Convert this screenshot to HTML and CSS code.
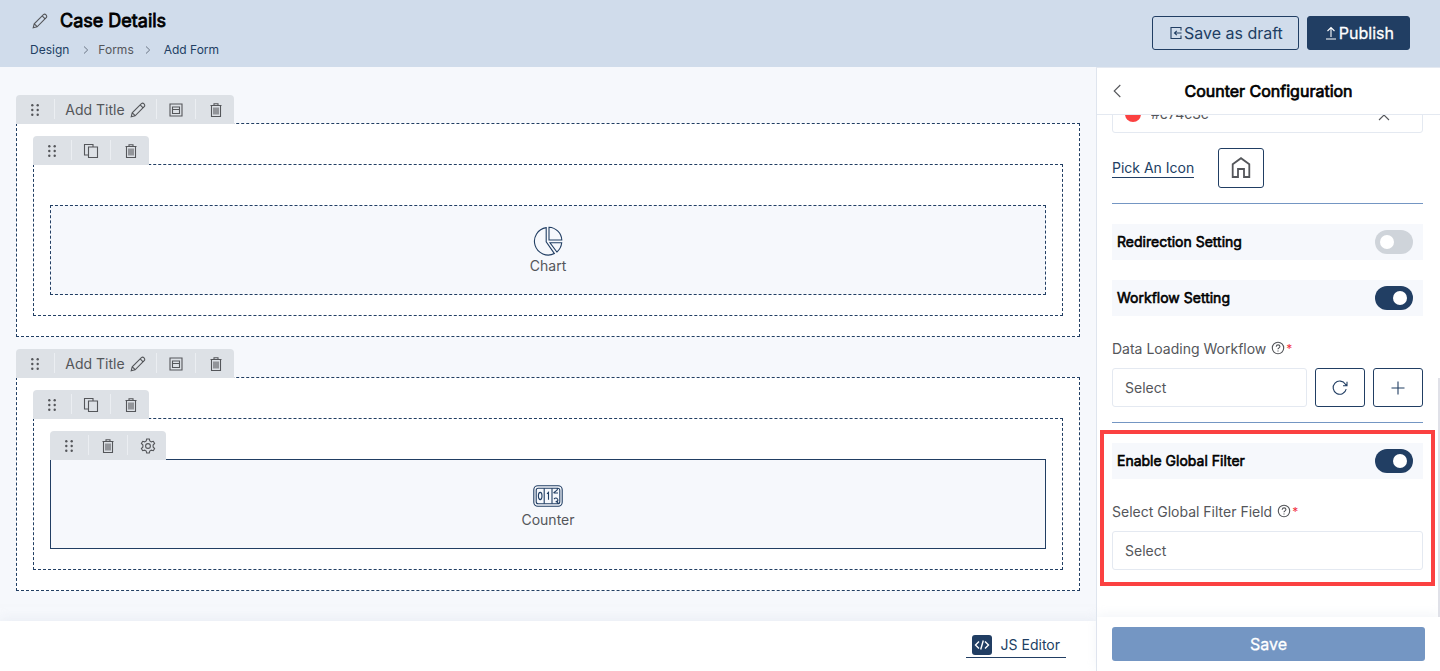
FILE: index.html
```html
<!DOCTYPE html>
<html lang="en">
<head>
<meta charset="utf-8">
<title>Case Details</title>
<link rel="stylesheet" href="styles.css">
</head>
<body>
<svg class="sprite" aria-hidden="true">
  <symbol id="pencil" viewBox="0 0 16 16"><path d="M1.2 14.8l1-4L11.4 1.6q1.4-1 2.6.3t.4 2.6L5.1 13.8zM10.2 2.9l2.9 2.9M2.3 10.8l2.9 2.9"/></symbol>
  <symbol id="grip" viewBox="0 0 10 14"><g fill="currentColor" stroke="none"><circle cx="2.3" cy="2.3" r="1.2"/><circle cx="7.7" cy="2.3" r="1.2"/><circle cx="2.3" cy="7" r="1.2"/><circle cx="7.7" cy="7" r="1.2"/><circle cx="2.3" cy="11.7" r="1.2"/><circle cx="7.7" cy="11.7" r="1.2"/></g></symbol>
  <symbol id="trash" viewBox="0 0 14 16"><path d="M1.5 3.5h11M5 3.3V1.7h4v1.6M2.5 3.7v10.8h9V3.7M5 5.5v7M7 5.5v7M9 5.5v7"/></symbol>
  <symbol id="layout" viewBox="0 0 14 14"><path d="M1 1h12v12H1zM3.5 4h7v6.5h-7zM3.5 6.5h7"/></symbol>
  <symbol id="copy" viewBox="0 0 16 16"><path d="M5.5 12h-4V1.5h8.5v2.5M5.5 4h9v10.5h-9z"/></symbol>
  <symbol id="gear" viewBox="0 0 16 16"><circle cx="8" cy="8" r="2.4"/><path d="M6.7 1h2.6l.5 2 1.5.9 2-.6 1.3 2.2L13.1 7v2l1.5 1.5-1.3 2.2-2-.6-1.5.9-.5 2H6.7l-.5-2-1.5-.9-2 .6-1.3-2.2L2.9 9V7L1.4 5.5l1.3-2.2 2 .6L6.2 3z"/></symbol>
  <symbol id="help" viewBox="0 0 14 14"><circle cx="7" cy="7" r="5.7"/><path d="M5.2 5.7q.2-1.8 1.9-1.8t1.8 1.5q0 .9-1 1.5-.9.5-.9 1.4M7 9.4v1.2"/></symbol>
  <symbol id="right" viewBox="0 0 6 10"><path d="M1 1.5L4.7 5 1 8.5"/></symbol>
</svg>

<header class="topbar">
  <div class="heading">
    <div class="title-row">
      <button class="plain" aria-label="Rename form"><svg class="icon16"><use href="#pencil"/></svg></button>
      <h1 class="title">Case Details</h1>
    </div>
    <nav class="crumbs" aria-label="Breadcrumb">
      <a class="crumb" href="#design">Design</a>
      <svg class="crumb-arrow"><use href="#right"/></svg>
      <a class="crumb muted" href="#forms">Forms</a>
      <svg class="crumb-arrow"><use href="#right"/></svg>
      <a class="crumb last" href="#add" aria-current="page">Add Form</a>
    </nav>
  </div>
  <div class="actions">
    <button class="btn outline"><svg class="icon12" viewBox="0 0 12 14"><path d="M11 4.5V1.5H1v11h10v-3M11.5 7H4.5M6.8 4.8L4.5 7l2.3 2.2"/></svg>Save as draft</button>
    <button class="btn solid"><svg class="icon12" viewBox="0 0 12 14"><path d="M6 11V1.5M2.5 5L6 1.5 9.5 5M1 13h10"/></svg>Publish</button>
  </div>
</header>

<div class="workspace">
  <main class="editor">
    <div class="canvas">
      <section class="block">
        <div class="toolbar">
          <button class="tool" aria-label="Move section"><svg class="grip"><use href="#grip"/></svg></button>
          <button class="tool name">Add Title<svg class="icon16"><use href="#pencil"/></svg></button>
          <button class="tool" aria-label="Section layout"><svg class="icon14"><use href="#layout"/></svg></button>
          <button class="tool" aria-label="Delete section"><svg class="trash"><use href="#trash"/></svg></button>
        </div>
        <div class="frame">
          <div class="toolbar">
            <button class="tool" aria-label="Move column"><svg class="grip"><use href="#grip"/></svg></button>
            <button class="tool" aria-label="Copy column"><svg class="icon16"><use href="#copy"/></svg></button>
            <button class="tool" aria-label="Delete column"><svg class="trash"><use href="#trash"/></svg></button>
          </div>
          <div class="frame idle">
            <div class="widget">
              <svg class="chart" viewBox="0 0 30 30"><path d="M13.2 1.6A13.8 13.8 0 1 0 21.4 27.6L13.2 15.8zM16 1.2V14h12.8A13.4 13.4 0 0 0 16 1.2zM17 16.8h11.7a14 14 0 0 1-4.8 9.2z"/></svg>
              <span>Chart</span>
            </div>
          </div>
        </div>
      </section>

      <section class="block">
        <div class="toolbar">
          <button class="tool" aria-label="Move section"><svg class="grip"><use href="#grip"/></svg></button>
          <button class="tool name">Add Title<svg class="icon16"><use href="#pencil"/></svg></button>
          <button class="tool" aria-label="Section layout"><svg class="icon14"><use href="#layout"/></svg></button>
          <button class="tool" aria-label="Delete section"><svg class="trash"><use href="#trash"/></svg></button>
        </div>
        <div class="frame">
          <div class="toolbar">
            <button class="tool" aria-label="Move column"><svg class="grip"><use href="#grip"/></svg></button>
            <button class="tool" aria-label="Copy column"><svg class="icon16"><use href="#copy"/></svg></button>
            <button class="tool" aria-label="Delete column"><svg class="trash"><use href="#trash"/></svg></button>
          </div>
          <div class="frame">
            <div class="toolbar">
              <button class="tool" aria-label="Move counter"><svg class="grip"><use href="#grip"/></svg></button>
              <button class="tool" aria-label="Delete counter"><svg class="trash"><use href="#trash"/></svg></button>
              <button class="tool" aria-label="Counter settings"><svg class="icon16"><use href="#gear"/></svg></button>
            </div>
            <div class="widget selected">
              <svg class="counter" viewBox="0 0 30 22"><rect x=".8" y=".8" width="28.4" height="20.4" rx="4"/><rect x="3.2" y="3.2" width="23.6" height="15.6" rx="2"/><path d="M11.2 3.2v15.6M19 3.2v15.6M14 8.8l1.5-1.5v7.5M20.5 8h4.5M20.5 8l3.8-3.2V3M21 14q2-2 3.5 0t-1.8 2.6q3.2.2 1.6 2"/><ellipse cx="7.2" cy="11" rx="1.8" ry="3.6"/></svg>
              <span>Counter</span>
            </div>
          </div>
        </div>
      </section>
    </div>
    <footer class="editor-foot">
      <a class="js-link" href="#js"><svg class="code" viewBox="0 0 20 20"><rect width="20" height="20" rx="3"/><path d="M7 6.5L3.5 10 7 13.5M13 6.5l3.5 3.5-3.5 3.5M11.3 5.5l-2.6 9"/></svg>JS Editor</a>
    </footer>
  </main>

  <aside class="panel">
    <div class="panel-head">
      <button class="plain" aria-label="Back"><svg class="back" viewBox="0 0 8 14"><path d="M7.3 1L1.2 7l6.1 6"/></svg></button>
      <h2 class="panel-title">Counter Configuration</h2>
    </div>
    <div class="panel-body">
      <div class="colour-field">
        <span class="swatch"></span>
        <input class="colour-input" type="text" value="#e74c3c" aria-label="Colour">
        <svg class="up" viewBox="0 0 12 8"><path d="M1 7l5-5 5 5"/></svg>
      </div>
      <div class="pick-row">
        <a class="pick" href="#icons">Pick An Icon</a>
        <button class="icon-pick" aria-label="Home icon"><svg class="home" viewBox="0 0 20 22"><path d="M1.7 20V7.2L10 1.2l8.3 6V20H13v-8H7v8z"/></svg></button>
      </div>
      <hr class="rule">
      <label class="setting">Redirection Setting<input class="switch" type="checkbox"></label>
      <label class="setting">Workflow Setting<input class="switch" type="checkbox" checked></label>
      <div class="field">
        <label class="label" for="workflow">Data Loading Workflow<svg class="icon14"><use href="#help"/></svg><span class="star">*</span></label>
        <div class="field-row">
          <select class="select" id="workflow"><option>Select</option></select>
          <button class="square" aria-label="Refresh"><svg class="icon16" viewBox="0 0 16 16"><path d="M14.2 9.2A6.6 6.6 0 1 1 13.4 4.2L14.8 5.8M15 1.8v4h-4"/></svg></button>
          <button class="square" aria-label="Add"><svg class="icon14" viewBox="0 0 14 14"><path d="M7 .5v13M.5 7h13"/></svg></button>
        </div>
      </div>
      <hr class="rule">
      <div class="highlight">
        <label class="setting">Enable Global Filter<input class="switch" type="checkbox" checked></label>
        <div class="field">
          <label class="label" for="filter">Select Global Filter Field<svg class="icon14"><use href="#help"/></svg><span class="star">*</span></label>
          <select class="select" id="filter"><option>Select</option></select>
        </div>
      </div>
      <span class="scroll-thumb"></span>
    </div>
    <div class="panel-foot"><button class="save">Save</button></div>
  </aside>
</div>
</body>
</html>
```
FILE: styles.css
```css
:root {
  --navy: #213e63;
  --text: #54565a;
  --surface: #f6f8fc;
  --line: #e4e9f1;
}

* { box-sizing: border-box; }

body {
  margin: 0;
  height: 100vh;
  display: flex;
  flex-direction: column;
  overflow: hidden;
  background: var(--surface);
  color: var(--text);
  font: 14px/20px Inter, sans-serif;
}

button, input, select { font: inherit; color: inherit; margin: 0; }
button { cursor: pointer; }
a { color: inherit; text-decoration: none; }
svg { display: block; flex: none; fill: none; stroke: currentColor; stroke-width: 1.1; }

.sprite { position: absolute; width: 0; height: 0; }
.icon12 { width: 12px; height: 14px; }
.icon14 { width: 14px; height: 14px; }
.icon16 { width: 16px; height: 16px; }
.grip { width: 10px; height: 14px; }
.trash { width: 14px; height: 16px; }
.plain { border: 0; padding: 0; background: none; }

/* Top bar */
.topbar {
  display: flex;
  justify-content: space-between;
  align-items: flex-start;
  height: 67px;
  flex: none;
  padding: 9px 30px 0;
  background: #d0dceb;
}
.title-row { display: flex; align-items: center; gap: 12px; padding-left: 2px; }
.title {
  margin: 0;
  color: #000;
  font-size: 18px;
  font-weight: 400;
  line-height: 24px;
  -webkit-text-stroke: 0.8px #000;
}
.crumbs { display: flex; align-items: center; margin-top: 7px; font-size: 12px; line-height: 20px; }
.crumb { color: var(--navy); }
.crumb.muted { color: var(--text); }
.crumb-arrow { width: 6px; height: 10px; margin: 0 9px 0 14px; stroke-width: 1; color: #6b7685; }
.crumb.muted + .crumb-arrow { margin: 0 13px 0 11px; }
.actions { display: flex; gap: 8px; margin-top: 7px; }
.btn {
  display: flex;
  align-items: center;
  justify-content: center;
  gap: 2px;
  height: 34px;
  padding: 0 15px 0 17px;
  border: 1px solid var(--navy);
  border-radius: 3px;
  font-size: 16px;
}
.outline { background: none; color: var(--navy); }
.solid { background: var(--navy); color: #fff; -webkit-text-stroke: 0.3px #fff; }

/* Workspace */
.workspace { display: flex; flex: 1; min-height: 0; }
.editor { display: flex; flex-direction: column; flex: 1; min-width: 0; }
.canvas {
  display: flex;
  flex-direction: column;
  gap: 12px;
  flex: 1;
  min-height: 0;
  padding: 28px 16px 0;
}
.toolbar {
  display: flex;
  width: max-content;
  height: 29px;
  margin-bottom: -1px;
  padding: 4px 0 5px;
  position: relative;
  background: #dde1e6;
  border-radius: 4px 4px 0 0;
}
.tool {
  display: flex;
  align-items: center;
  justify-content: center;
  width: 39px;
  padding: 2px 0 0;
  border: 0;
  border-right: 1px solid #ebeef2;
  background: none;
}
.tool:last-child { width: 38px; padding-left: 2px; border-right: 0; }
.name { width: 102px; gap: 5px; }
.block > .frame, .frame > .frame, .widget { border: 1px dashed var(--navy); }
.frame { padding: 12px 16px 20px; background: #fff; }
.frame.idle { padding-top: 40px; }
.widget {
  display: flex;
  flex-direction: column;
  align-items: center;
  justify-content: center;
  height: 90px;
  background: var(--surface);
}
.widget.selected { border-style: solid; }
.chart { width: 30px; height: 30px; margin-top: 2px; color: var(--navy); }
.counter { width: 30px; height: 22px; margin: 6px 0 3px; color: var(--navy); }
.editor-foot {
  display: flex;
  justify-content: flex-end;
  flex: none;
  height: 50px;
  padding: 12px 30px 0;
  background: #fff;
  box-shadow: 0 -2px 10px #dfe5ee88;
}
.js-link {
  display: flex;
  align-items: center;
  gap: 9px;
  height: 25px;
  padding: 0 6px;
  border-bottom: 1px solid var(--navy);
  color: var(--navy);
}
.code { width: 20px; height: 20px; stroke: #fff; stroke-width: 1.4; }
.code rect { fill: var(--navy); stroke: none; }

/* Configuration panel */
.panel {
  display: flex;
  flex-direction: column;
  width: 344px;
  flex: none;
  border-left: 1px solid #dfe5ee;
  border-top: 1px solid var(--line);
  background: #fff;
}
.panel-head {
  display: grid;
  grid-template-columns: 8px 1fr 8px;
  align-items: center;
  height: 47px;
  flex: none;
  padding: 0 16px;
  border-bottom: 1px solid var(--line);
}
.back { width: 8px; height: 14px; }
.panel-title {
  margin: 0;
  color: #000;
  font-size: 16px;
  font-weight: 400;
  text-align: center;
  -webkit-text-stroke: 0.7px #000;
}
.panel-body { position: relative; flex: 1; min-height: 0; overflow: hidden; padding: 0 17px 0 15px; }
.colour-field {
  display: flex;
  align-items: center;
  gap: 10px;
  height: 39px;
  margin-top: -21px;
  padding: 0 32px 0 12px;
  border: 1px solid var(--line);
  border-radius: 3px;
}
.swatch { width: 16px; height: 16px; border-radius: 50%; background: #fb4141; }
.colour-input { flex: 1; min-width: 0; border: 0; padding: 0; background: none; }
.up { width: 12px; height: 8px; margin-top: 6px; }
.pick-row { display: flex; align-items: center; gap: 24px; margin-top: 15px; }
.pick { color: var(--navy); line-height: 18px; border-bottom: 1px solid var(--navy); }
.icon-pick, .square {
  display: grid;
  place-items: center;
  padding: 0;
  border: 1px solid var(--navy);
  border-radius: 3px;
  background: #fff;
}
.icon-pick { width: 46px; height: 40px; color: var(--text); }
.home { width: 20px; height: 22px; stroke-width: 1.8; }
.rule { height: 1px; margin: 15px 0 20px; border: 0; background: #7496c3; }
.setting {
  display: flex;
  align-items: center;
  justify-content: space-between;
  height: 36px;
  padding: 0 10px 0 5px;
  background: var(--surface);
  color: #000;
  -webkit-text-stroke: 0.6px #000;
}
.setting + .setting { margin-top: 20px; }
.switch {
  appearance: none;
  width: 38px;
  height: 24px;
  padding: 5px 6px 5px 5px;
  border-radius: 12px;
  background: #cfd4da;
}
.switch::before { content: ""; display: block; width: 14px; height: 14px; border-radius: 50%; background: #fff; }
.switch:checked { background: var(--navy); }
.switch:checked::before { margin-left: auto; }
.field { margin-top: 23px; }
.label { display: flex; align-items: center; height: 20px; margin-bottom: 9px; }
.label .icon14 { margin: 0 1px 3px 5px; }
.star { color: #f2313f; font-size: 12px; }
.field-row { display: flex; gap: 8px; }
.select {
  appearance: none;
  flex: 1;
  width: 100%;
  min-width: 0;
  height: 39px;
  padding: 0 12px;
  border: 1px solid var(--line);
  border-radius: 3px;
  background: #fff;
}
.square { width: 50px; height: 39px; color: var(--navy); }
.highlight { position: relative; }
.highlight::after {
  content: "";
  position: absolute;
  inset: -13px -12px -16px;
  border: 4px solid #fb4141;
  pointer-events: none;
}
.scroll-thumb { position: absolute; right: 0; bottom: 0; width: 2px; height: 239px; background: #e0e1e8; }
.panel-foot {
  flex: none;
  padding: 10px 15px;
  background: #fff;
  box-shadow: 0 -2px 10px #dfe5ee66;
}
.save {
  width: 100%;
  height: 34px;
  border: 0;
  border-radius: 3px;
  background: #7496c3;
  color: #fff;
  font-size: 16px;
  -webkit-text-stroke: 0.3px #fff;
}
```
